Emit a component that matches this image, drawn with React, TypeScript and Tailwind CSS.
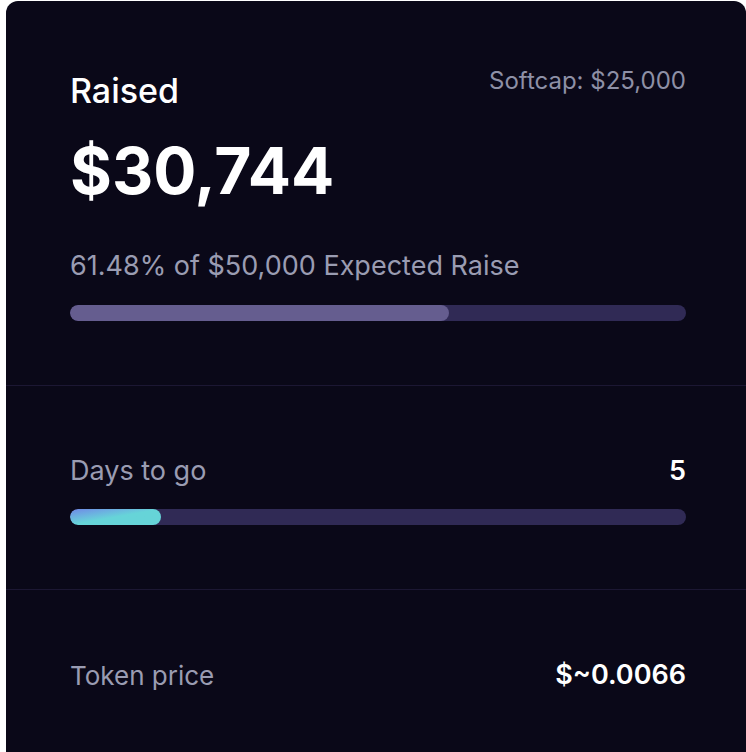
import React from "react";

export default function App() {
  return (
    <div className="w-[746px] h-[752px] bg-white overflow-hidden" style={{ fontFamily: "Inter, 'Noto Sans', sans-serif" }}>
      <div className="ml-[6px] mt-[1px] w-[740px] h-[800px] rounded-[12px] bg-[#0a0818] flex flex-col">
        <div className="pl-16 pr-[60px] pt-16 pb-16 border-b border-[#1c1733]">
          <div className="flex items-start justify-between">
            <div className="text-[34px] leading-[52px] text-white font-medium">Raised</div>
            <div className="text-[24px] leading-[32px] text-[#8e90a6]">Softcap: $25,000</div>
          </div>
          <div className="mt-[19px] text-[64px] leading-[70px] text-white font-bold">$30,744</div>
          <div className="mt-[42px] text-[27px] leading-[36px] text-[#9a9cb2]">61.48% of $50,000 Expected Raise</div>
          <div className="mt-[21px] h-4 rounded-full bg-[#302a55] overflow-hidden">
            <div className="h-full rounded-full bg-[#655d8f]" style={{ width: "61.48%" }} />
          </div>
        </div>
        <div className="pl-16 pr-[60px] pt-16 pb-16 border-b border-[#1c1733]">
          <div className="flex items-center justify-between h-[42px]">
            <div className="text-[27px] text-[#9a9cb2]">Days to go</div>
            <div className="text-[27px] text-white font-semibold">5</div>
          </div>
          <div className="mt-[17px] h-4 rounded-full bg-[#302a55] overflow-hidden">
            <div className="h-full w-[91px] rounded-full bg-gradient-to-br from-[#6f87e6] via-[#66d4d8] to-[#66d4d8]" />
          </div>
        </div>
        <div className="pl-16 pr-[60px] pt-16 pb-16">
          <div className="flex items-center justify-between h-[42px]">
            <div className="text-[26px] text-[#9a9cb2]">Token price</div>
            <div className="text-[27px] text-white font-semibold">$~0.0066</div>
          </div>
        </div>
      </div>
    </div>
  );
}
